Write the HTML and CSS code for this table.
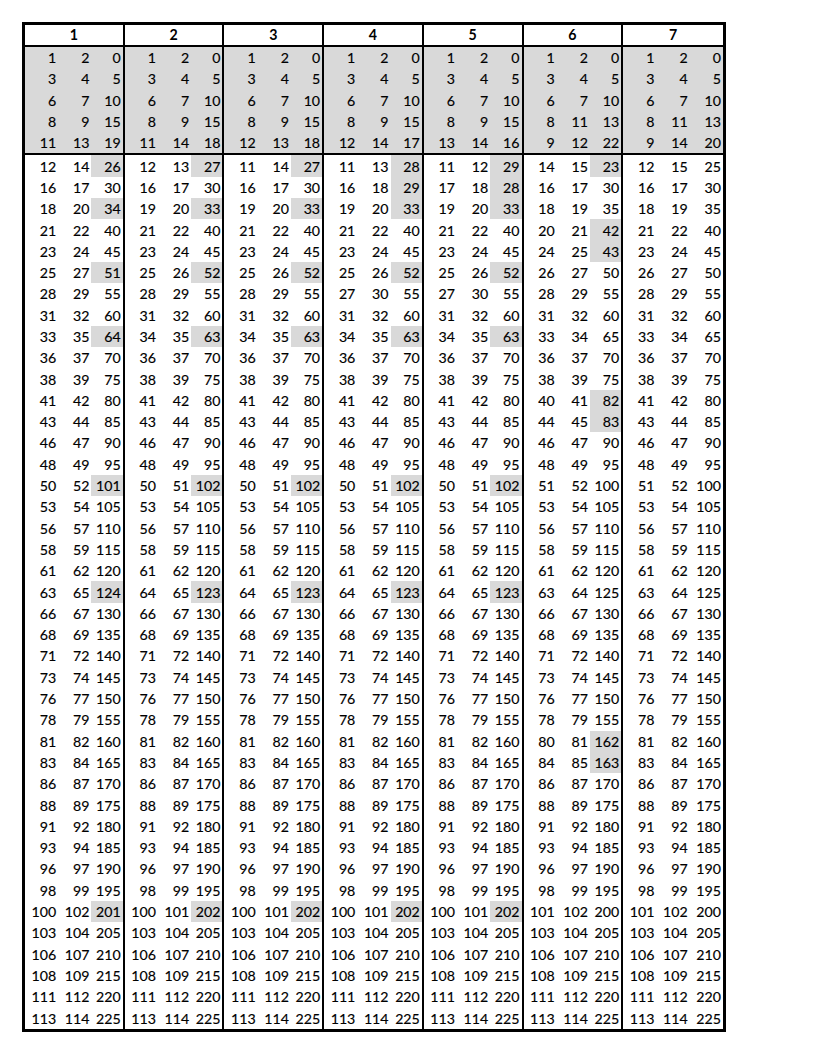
FILE: index.html
```html
<!DOCTYPE html>
<html lang="en">
<head>
<meta charset="utf-8">
<title>Table</title>
<link rel="stylesheet" href="styles.css">
</head>
<body>
<table class="sheet">
<thead>
<tr><th colspan="3">1</th><th colspan="3">2</th><th colspan="3">3</th><th colspan="3">4</th><th colspan="3">5</th><th colspan="3">6</th><th colspan="3">7</th></tr>
</thead>
<tbody class="top">
<tr><td>1</td><td>2</td><td>0</td><td>1</td><td>2</td><td>0</td><td>1</td><td>2</td><td>0</td><td>1</td><td>2</td><td>0</td><td>1</td><td>2</td><td>0</td><td>1</td><td>2</td><td>0</td><td>1</td><td>2</td><td>0</td></tr>
<tr><td>3</td><td>4</td><td>5</td><td>3</td><td>4</td><td>5</td><td>3</td><td>4</td><td>5</td><td>3</td><td>4</td><td>5</td><td>3</td><td>4</td><td>5</td><td>3</td><td>4</td><td>5</td><td>3</td><td>4</td><td>5</td></tr>
<tr><td>6</td><td>7</td><td>10</td><td>6</td><td>7</td><td>10</td><td>6</td><td>7</td><td>10</td><td>6</td><td>7</td><td>10</td><td>6</td><td>7</td><td>10</td><td>6</td><td>7</td><td>10</td><td>6</td><td>7</td><td>10</td></tr>
<tr><td>8</td><td>9</td><td>15</td><td>8</td><td>9</td><td>15</td><td>8</td><td>9</td><td>15</td><td>8</td><td>9</td><td>15</td><td>8</td><td>9</td><td>15</td><td>8</td><td>11</td><td>13</td><td>8</td><td>11</td><td>13</td></tr>
<tr class="last"><td>11</td><td>13</td><td>19</td><td>11</td><td>14</td><td>18</td><td>12</td><td>13</td><td>18</td><td>12</td><td>14</td><td>17</td><td>13</td><td>14</td><td>16</td><td>9</td><td>12</td><td>22</td><td>9</td><td>14</td><td>20</td></tr>
</tbody>
<tbody class="main">
<tr><td>12</td><td>14</td><td class="h">26</td><td>12</td><td>13</td><td class="h">27</td><td>11</td><td>14</td><td class="h">27</td><td>11</td><td>13</td><td class="h">28</td><td>11</td><td>12</td><td class="h">29</td><td>14</td><td>15</td><td class="h">23</td><td>12</td><td>15</td><td>25</td></tr>
<tr><td>16</td><td>17</td><td>30</td><td>16</td><td>17</td><td>30</td><td>16</td><td>17</td><td>30</td><td>16</td><td>18</td><td class="h">29</td><td>17</td><td>18</td><td class="h">28</td><td>16</td><td>17</td><td>30</td><td>16</td><td>17</td><td>30</td></tr>
<tr><td>18</td><td>20</td><td class="h">34</td><td>19</td><td>20</td><td class="h">33</td><td>19</td><td>20</td><td class="h">33</td><td>19</td><td>20</td><td class="h">33</td><td>19</td><td>20</td><td class="h">33</td><td>18</td><td>19</td><td>35</td><td>18</td><td>19</td><td>35</td></tr>
<tr><td>21</td><td>22</td><td>40</td><td>21</td><td>22</td><td>40</td><td>21</td><td>22</td><td>40</td><td>21</td><td>22</td><td>40</td><td>21</td><td>22</td><td>40</td><td>20</td><td>21</td><td class="h">42</td><td>21</td><td>22</td><td>40</td></tr>
<tr><td>23</td><td>24</td><td>45</td><td>23</td><td>24</td><td>45</td><td>23</td><td>24</td><td>45</td><td>23</td><td>24</td><td>45</td><td>23</td><td>24</td><td>45</td><td>24</td><td>25</td><td class="h">43</td><td>23</td><td>24</td><td>45</td></tr>
<tr><td>25</td><td>27</td><td class="h">51</td><td>25</td><td>26</td><td class="h">52</td><td>25</td><td>26</td><td class="h">52</td><td>25</td><td>26</td><td class="h">52</td><td>25</td><td>26</td><td class="h">52</td><td>26</td><td>27</td><td>50</td><td>26</td><td>27</td><td>50</td></tr>
<tr><td>28</td><td>29</td><td>55</td><td>28</td><td>29</td><td>55</td><td>28</td><td>29</td><td>55</td><td>27</td><td>30</td><td>55</td><td>27</td><td>30</td><td>55</td><td>28</td><td>29</td><td>55</td><td>28</td><td>29</td><td>55</td></tr>
<tr><td>31</td><td>32</td><td>60</td><td>31</td><td>32</td><td>60</td><td>31</td><td>32</td><td>60</td><td>31</td><td>32</td><td>60</td><td>31</td><td>32</td><td>60</td><td>31</td><td>32</td><td>60</td><td>31</td><td>32</td><td>60</td></tr>
<tr><td>33</td><td>35</td><td class="h">64</td><td>34</td><td>35</td><td class="h">63</td><td>34</td><td>35</td><td class="h">63</td><td>34</td><td>35</td><td class="h">63</td><td>34</td><td>35</td><td class="h">63</td><td>33</td><td>34</td><td>65</td><td>33</td><td>34</td><td>65</td></tr>
<tr><td>36</td><td>37</td><td>70</td><td>36</td><td>37</td><td>70</td><td>36</td><td>37</td><td>70</td><td>36</td><td>37</td><td>70</td><td>36</td><td>37</td><td>70</td><td>36</td><td>37</td><td>70</td><td>36</td><td>37</td><td>70</td></tr>
<tr><td>38</td><td>39</td><td>75</td><td>38</td><td>39</td><td>75</td><td>38</td><td>39</td><td>75</td><td>38</td><td>39</td><td>75</td><td>38</td><td>39</td><td>75</td><td>38</td><td>39</td><td>75</td><td>38</td><td>39</td><td>75</td></tr>
<tr><td>41</td><td>42</td><td>80</td><td>41</td><td>42</td><td>80</td><td>41</td><td>42</td><td>80</td><td>41</td><td>42</td><td>80</td><td>41</td><td>42</td><td>80</td><td>40</td><td>41</td><td class="h">82</td><td>41</td><td>42</td><td>80</td></tr>
<tr><td>43</td><td>44</td><td>85</td><td>43</td><td>44</td><td>85</td><td>43</td><td>44</td><td>85</td><td>43</td><td>44</td><td>85</td><td>43</td><td>44</td><td>85</td><td>44</td><td>45</td><td class="h">83</td><td>43</td><td>44</td><td>85</td></tr>
<tr><td>46</td><td>47</td><td>90</td><td>46</td><td>47</td><td>90</td><td>46</td><td>47</td><td>90</td><td>46</td><td>47</td><td>90</td><td>46</td><td>47</td><td>90</td><td>46</td><td>47</td><td>90</td><td>46</td><td>47</td><td>90</td></tr>
<tr><td>48</td><td>49</td><td>95</td><td>48</td><td>49</td><td>95</td><td>48</td><td>49</td><td>95</td><td>48</td><td>49</td><td>95</td><td>48</td><td>49</td><td>95</td><td>48</td><td>49</td><td>95</td><td>48</td><td>49</td><td>95</td></tr>
<tr><td>50</td><td>52</td><td class="h">101</td><td>50</td><td>51</td><td class="h">102</td><td>50</td><td>51</td><td class="h">102</td><td>50</td><td>51</td><td class="h">102</td><td>50</td><td>51</td><td class="h">102</td><td>51</td><td>52</td><td>100</td><td>51</td><td>52</td><td>100</td></tr>
<tr><td>53</td><td>54</td><td>105</td><td>53</td><td>54</td><td>105</td><td>53</td><td>54</td><td>105</td><td>53</td><td>54</td><td>105</td><td>53</td><td>54</td><td>105</td><td>53</td><td>54</td><td>105</td><td>53</td><td>54</td><td>105</td></tr>
<tr><td>56</td><td>57</td><td>110</td><td>56</td><td>57</td><td>110</td><td>56</td><td>57</td><td>110</td><td>56</td><td>57</td><td>110</td><td>56</td><td>57</td><td>110</td><td>56</td><td>57</td><td>110</td><td>56</td><td>57</td><td>110</td></tr>
<tr><td>58</td><td>59</td><td>115</td><td>58</td><td>59</td><td>115</td><td>58</td><td>59</td><td>115</td><td>58</td><td>59</td><td>115</td><td>58</td><td>59</td><td>115</td><td>58</td><td>59</td><td>115</td><td>58</td><td>59</td><td>115</td></tr>
<tr><td>61</td><td>62</td><td>120</td><td>61</td><td>62</td><td>120</td><td>61</td><td>62</td><td>120</td><td>61</td><td>62</td><td>120</td><td>61</td><td>62</td><td>120</td><td>61</td><td>62</td><td>120</td><td>61</td><td>62</td><td>120</td></tr>
<tr><td>63</td><td>65</td><td class="h">124</td><td>64</td><td>65</td><td class="h">123</td><td>64</td><td>65</td><td class="h">123</td><td>64</td><td>65</td><td class="h">123</td><td>64</td><td>65</td><td class="h">123</td><td>63</td><td>64</td><td>125</td><td>63</td><td>64</td><td>125</td></tr>
<tr><td>66</td><td>67</td><td>130</td><td>66</td><td>67</td><td>130</td><td>66</td><td>67</td><td>130</td><td>66</td><td>67</td><td>130</td><td>66</td><td>67</td><td>130</td><td>66</td><td>67</td><td>130</td><td>66</td><td>67</td><td>130</td></tr>
<tr><td>68</td><td>69</td><td>135</td><td>68</td><td>69</td><td>135</td><td>68</td><td>69</td><td>135</td><td>68</td><td>69</td><td>135</td><td>68</td><td>69</td><td>135</td><td>68</td><td>69</td><td>135</td><td>68</td><td>69</td><td>135</td></tr>
<tr><td>71</td><td>72</td><td>140</td><td>71</td><td>72</td><td>140</td><td>71</td><td>72</td><td>140</td><td>71</td><td>72</td><td>140</td><td>71</td><td>72</td><td>140</td><td>71</td><td>72</td><td>140</td><td>71</td><td>72</td><td>140</td></tr>
<tr><td>73</td><td>74</td><td>145</td><td>73</td><td>74</td><td>145</td><td>73</td><td>74</td><td>145</td><td>73</td><td>74</td><td>145</td><td>73</td><td>74</td><td>145</td><td>73</td><td>74</td><td>145</td><td>73</td><td>74</td><td>145</td></tr>
<tr><td>76</td><td>77</td><td>150</td><td>76</td><td>77</td><td>150</td><td>76</td><td>77</td><td>150</td><td>76</td><td>77</td><td>150</td><td>76</td><td>77</td><td>150</td><td>76</td><td>77</td><td>150</td><td>76</td><td>77</td><td>150</td></tr>
<tr><td>78</td><td>79</td><td>155</td><td>78</td><td>79</td><td>155</td><td>78</td><td>79</td><td>155</td><td>78</td><td>79</td><td>155</td><td>78</td><td>79</td><td>155</td><td>78</td><td>79</td><td>155</td><td>78</td><td>79</td><td>155</td></tr>
<tr><td>81</td><td>82</td><td>160</td><td>81</td><td>82</td><td>160</td><td>81</td><td>82</td><td>160</td><td>81</td><td>82</td><td>160</td><td>81</td><td>82</td><td>160</td><td>80</td><td>81</td><td class="h">162</td><td>81</td><td>82</td><td>160</td></tr>
<tr><td>83</td><td>84</td><td>165</td><td>83</td><td>84</td><td>165</td><td>83</td><td>84</td><td>165</td><td>83</td><td>84</td><td>165</td><td>83</td><td>84</td><td>165</td><td>84</td><td>85</td><td class="h">163</td><td>83</td><td>84</td><td>165</td></tr>
<tr><td>86</td><td>87</td><td>170</td><td>86</td><td>87</td><td>170</td><td>86</td><td>87</td><td>170</td><td>86</td><td>87</td><td>170</td><td>86</td><td>87</td><td>170</td><td>86</td><td>87</td><td>170</td><td>86</td><td>87</td><td>170</td></tr>
<tr><td>88</td><td>89</td><td>175</td><td>88</td><td>89</td><td>175</td><td>88</td><td>89</td><td>175</td><td>88</td><td>89</td><td>175</td><td>88</td><td>89</td><td>175</td><td>88</td><td>89</td><td>175</td><td>88</td><td>89</td><td>175</td></tr>
<tr><td>91</td><td>92</td><td>180</td><td>91</td><td>92</td><td>180</td><td>91</td><td>92</td><td>180</td><td>91</td><td>92</td><td>180</td><td>91</td><td>92</td><td>180</td><td>91</td><td>92</td><td>180</td><td>91</td><td>92</td><td>180</td></tr>
<tr><td>93</td><td>94</td><td>185</td><td>93</td><td>94</td><td>185</td><td>93</td><td>94</td><td>185</td><td>93</td><td>94</td><td>185</td><td>93</td><td>94</td><td>185</td><td>93</td><td>94</td><td>185</td><td>93</td><td>94</td><td>185</td></tr>
<tr><td>96</td><td>97</td><td>190</td><td>96</td><td>97</td><td>190</td><td>96</td><td>97</td><td>190</td><td>96</td><td>97</td><td>190</td><td>96</td><td>97</td><td>190</td><td>96</td><td>97</td><td>190</td><td>96</td><td>97</td><td>190</td></tr>
<tr><td>98</td><td>99</td><td>195</td><td>98</td><td>99</td><td>195</td><td>98</td><td>99</td><td>195</td><td>98</td><td>99</td><td>195</td><td>98</td><td>99</td><td>195</td><td>98</td><td>99</td><td>195</td><td>98</td><td>99</td><td>195</td></tr>
<tr><td>100</td><td>102</td><td class="h">201</td><td>100</td><td>101</td><td class="h">202</td><td>100</td><td>101</td><td class="h">202</td><td>100</td><td>101</td><td class="h">202</td><td>100</td><td>101</td><td class="h">202</td><td>101</td><td>102</td><td>200</td><td>101</td><td>102</td><td>200</td></tr>
<tr><td>103</td><td>104</td><td>205</td><td>103</td><td>104</td><td>205</td><td>103</td><td>104</td><td>205</td><td>103</td><td>104</td><td>205</td><td>103</td><td>104</td><td>205</td><td>103</td><td>104</td><td>205</td><td>103</td><td>104</td><td>205</td></tr>
<tr><td>106</td><td>107</td><td>210</td><td>106</td><td>107</td><td>210</td><td>106</td><td>107</td><td>210</td><td>106</td><td>107</td><td>210</td><td>106</td><td>107</td><td>210</td><td>106</td><td>107</td><td>210</td><td>106</td><td>107</td><td>210</td></tr>
<tr><td>108</td><td>109</td><td>215</td><td>108</td><td>109</td><td>215</td><td>108</td><td>109</td><td>215</td><td>108</td><td>109</td><td>215</td><td>108</td><td>109</td><td>215</td><td>108</td><td>109</td><td>215</td><td>108</td><td>109</td><td>215</td></tr>
<tr><td>111</td><td>112</td><td>220</td><td>111</td><td>112</td><td>220</td><td>111</td><td>112</td><td>220</td><td>111</td><td>112</td><td>220</td><td>111</td><td>112</td><td>220</td><td>111</td><td>112</td><td>220</td><td>111</td><td>112</td><td>220</td></tr>
<tr><td>113</td><td>114</td><td>225</td><td>113</td><td>114</td><td>225</td><td>113</td><td>114</td><td>225</td><td>113</td><td>114</td><td>225</td><td>113</td><td>114</td><td>225</td><td>113</td><td>114</td><td>225</td><td>113</td><td>114</td><td>225</td></tr>
</tbody>
</table>
</body>
</html>
```

FILE: styles.css
```css
html, body {
  margin: 0;
  padding: 0;
  background: #ffffff;
}

body {
  font-family: Lato, "Liberation Sans", sans-serif;
  color: #000000;
}

.sheet {
  margin: 22px 0 0 22px;
  width: 704px;
  table-layout: fixed;
  border-collapse: separate;
  border-spacing: 0;
  border: 3px solid #000000;
}

.sheet th {
  height: 20px;
  padding: 0;
  font-size: 14.2px;
  font-weight: 700;
  text-align: center;
  vertical-align: middle;
  line-height: 20px;
  border-bottom: 2px solid #000000;
}

.sheet th:not(:last-child) {
  border-right: 2px solid #000000;
}

.sheet td {
  height: 21.3px;
  padding: 0 2px 0 0;
  font-size: 14.2px;
  line-height: 21px;
  text-align: right;
  vertical-align: middle;
  white-space: nowrap;
  -webkit-text-stroke: 0.15px #000000;
}

.sheet td:nth-child(3n):not(:last-child) {
  border-right: 2px solid #000000;
}

.top td {
  background: #d9d9d9;
}

.top tr.last td {
  border-bottom: 2px solid #000000;
}

.main td.h {
  background: #d9d9d9;
}
```
